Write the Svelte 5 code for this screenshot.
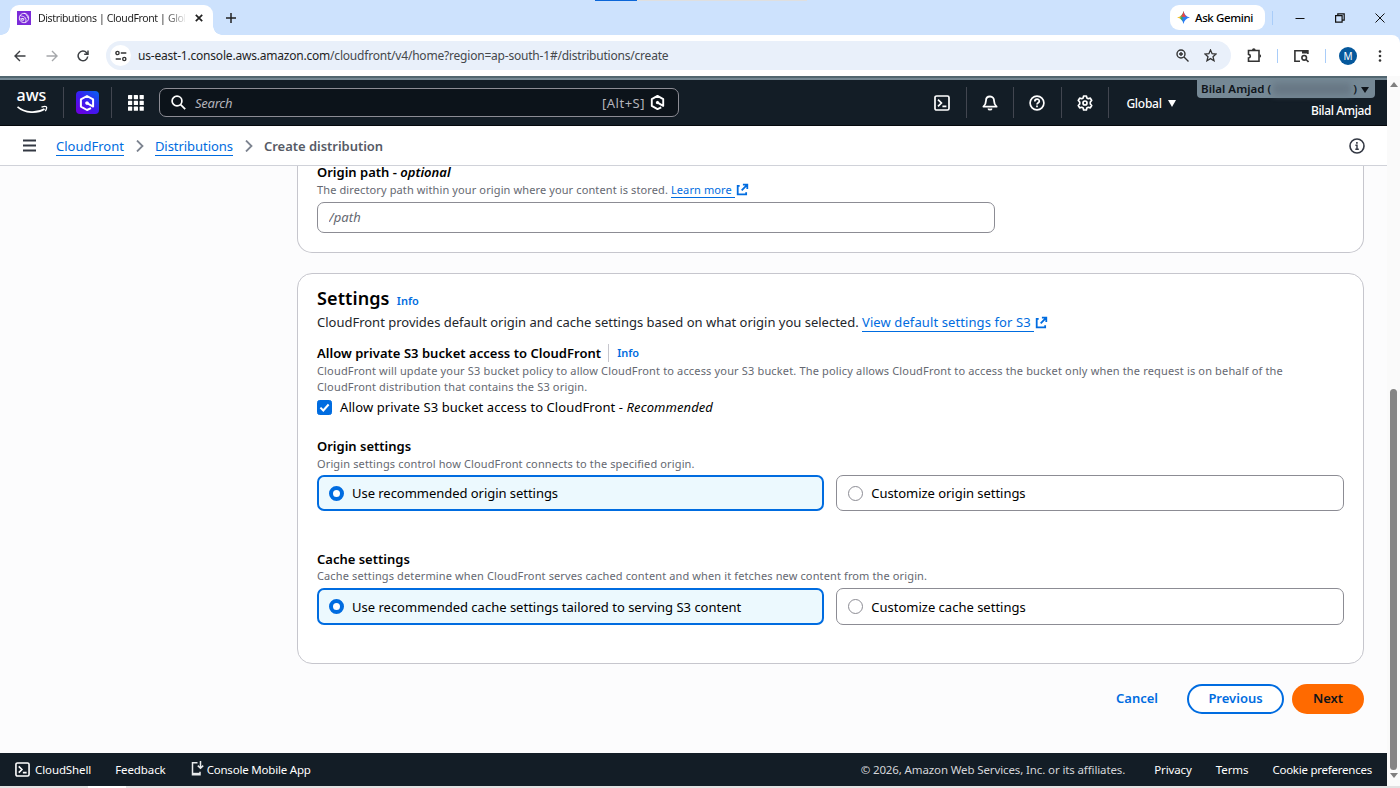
<script>
	const url = { host: "us-east-1.console.aws.amazon.com", path: "/cloudfront/v4/home?region=ap-south-1#/distributions/create" };

	let allowPrivate = $state(true);
	let groups = $state([
		{
			name: "origin",
			title: "Origin settings",
			hint: "Origin settings control how CloudFront connects to the specified origin.",
			options: ["Use recommended origin settings", "Customize origin settings"],
			selected: 0,
		},
		{
			name: "cache",
			title: "Cache settings",
			hint: "Cache settings determine when CloudFront serves cached content and when it fetches new content from the origin.",
			options: ["Use recommended cache settings tailored to serving S3 content", "Customize cache settings"],
			selected: 0,
		},
	]);
</script>

{#snippet shellIcon(size)}
	<svg width={size} height={size} viewBox="0 0 16 16" fill="none" stroke="currentColor" stroke-width="1.7">
		<rect x="1" y="1" width="14" height="14" rx="1.6" />
		<path d="M4 4.6 7.4 8 4 11.4M8.4 11.3h4" />
	</svg>
{/snippet}

{#snippet external(size)}
	<svg class="ext" width={size} height={size} viewBox="0 0 16 16" fill="none" stroke="currentColor" stroke-width="2.2">
		<path d="M8.500 2.100h5.400v5.400M13.600 2.400 7 9M4.500 3.500H2.100v10.400h10.400v-2.400" />
	</svg>
{/snippet}

{#snippet amazonQ(size)}
	<svg width={size} height={size} viewBox="0 0 16 16" fill="none" stroke="currentColor" stroke-width="2" stroke-linejoin="round">
		<path d="M12 13.200 8 15 1.900 11.600V4.400L8 1l6.100 3.400v7.200L8.500 8.400" />
		<path d="M8 6.200 9.700 7.100v1.900L8 9.900 6.300 9V7.100z" fill="currentColor" stroke="none" />
	</svg>
{/snippet}

<div class="window">
	<div class="tabstrip">
		<div class="tab">
			<svg width="14" height="14" viewBox="0 0 14 14" fill="none" stroke="#fff" stroke-width=".8">
				<rect width="14" height="14" fill="#7b2bd9" stroke="none" />
				<circle cx="7" cy="7" r="4.700" />
				<path d="M3 4.500c2 1 3 .5 4.500 1.500s2 3.500 1 5.500M7 2.200c2 .8 3.500 2.500 4 5M2.500 8.500c1.500-1 3-1.500 5-.5" />
				<circle cx="5.500" cy="8.800" r="1" />
			</svg>
			<span class="tab-title">Distributions | CloudFront | Glob</span>
			<svg width="8" height="8" viewBox="0 0 8 8" stroke="#222" stroke-width="1.7"><path d="m.8.8 6.400 6.400M7.200.8.8 7.200" /></svg>
		</div>
		<svg class="plus" width="10" height="10" viewBox="0 0 10 10" stroke="#222" stroke-width="1.500"><path d="M5 0v10M0 5h10" /></svg>
		<div class="progress"><i></i></div>
		<div class="gemini">
			<svg width="13" height="13" viewBox="0 0 13 13">
				<defs>
					<linearGradient id="gem" x1="0" y1=".4" x2="1" y2=".6">
						<stop offset="0" stop-color="#f6b81c" />
						<stop offset=".2" stop-color="#f0c02c" />
						<stop offset=".38" stop-color="#25a866" />
						<stop offset=".52" stop-color="#2b7cf5" />
						<stop offset="1" stop-color="#2b7cf5" />
					</linearGradient>
				</defs>
				<path d="M6.500 0C7.200 3.600 9.400 5.800 13 6.500 9.400 7.200 7.200 9.400 6.500 13 5.800 9.400 3.600 7.200 0 6.500 3.600 5.800 5.800 3.600 6.500 0z" fill="url(#gem)" />
				<path d="M6.500 0C7.200 3 7.900 4.500 9.500 5.600L6.500 6 3.800 5.200C5.200 4.300 6 3 6.500 0z" fill="#ee4145" />
			</svg>
			<span>Ask Gemini</span>
		</div>
		<span class="tick"></span>
		<div class="controls">
			<svg width="10" height="10" viewBox="0 0 10 10" stroke="#111"><path d="M.5 5.500h9" /></svg>
			<svg width="10" height="10" viewBox="0 0 10 10" fill="none" stroke="#111" stroke-width="1.200"><path d="M.6 2.600h6.500v6.500H.6zM2.800 2.300V.8h6.400v6.400H7.400" /></svg>
			<svg width="10" height="10" viewBox="0 0 10 10" stroke="#111"><path d="m.5.500 9 9m0-9-9 9" /></svg>
		</div>
	</div>

	<div class="toolbar">
		<div class="nav">
			<svg width="12" height="12" viewBox="0 0 12 12" fill="none" stroke="#3c3f43" stroke-width="1.400"><path d="M11.500 6H1.200M6 1 1 6l5 5" /></svg>
			<svg width="12" height="12" viewBox="0 0 12 12" fill="none" stroke="#a5a7aa" stroke-width="1.400"><path d="M.5 6h10.300M6 1l5 5-5 5" /></svg>
			<svg width="12" height="12" viewBox="0 0 12 12" fill="none" stroke="#3c3f43" stroke-width="1.500"><path d="M10.700 6.500A4.800 4.800 0 1 1 9.600 2.800L10.800 4M11 .5v3.800H7.200" /></svg>
		</div>
		<div class="omnibox">
			<span class="site">
				<svg width="12" height="12" viewBox="0 0 12 12" fill="none" stroke="#333" stroke-width="1.400"><circle cx="2.500" cy="3" r="1.600" /><path d="M5.800 3h5.500M.7 9h5.200" /><circle cx="9.300" cy="9" r="1.600" /></svg>
			</span>
			<span class="url"><b>{url.host}</b>{url.path}</span>
			<svg width="13" height="13" viewBox="0 0 13 13" fill="none" stroke="#333" stroke-width="1.400"><circle cx="5" cy="5" r="4" /><path d="m8 8 4.500 4.500M5 3v4M3 5h4" /></svg>
			<svg class="star" width="13" height="13" viewBox="0 0 13 13" fill="none" stroke="#333" stroke-width="1.300"><path d="m6.500 1 1.600 3.700 4 .3L9 7.700l1 4-3.500-2.100L3 11.700l1-4L.9 5l4-.3z" /></svg>
		</div>
		<svg class="puzzle" width="15" height="15" viewBox="0 0 15 15" fill="none" stroke="#333" stroke-width="1.600"><path d="M1.500 2.500H12v10.800H1.500V10c2.400-.3 2.400-3.300 0-3.600z" /><path d="M5 1.900a1.700 1.500 0 0 1 3.600 0zM12.600 6.200a1.500 1.700 0 0 1 0 3.400z" fill="#333" stroke="none" /></svg>
		<span class="tick"></span>
		<svg class="media" width="15" height="14" viewBox="0 0 15 14" fill="none" stroke="#333" stroke-width="1.600"><path d="M6 12.200H.9V1.800h13V5" /><path d="M8 3h6" stroke-width="3" /><circle cx="10.200" cy="8.800" r="2.300" /><path d="m12 10.500 2.500 2.500" /></svg>
		<span class="tick"></span>
		<span class="avatar">M</span>
		<svg class="dots" width="4" height="12" viewBox="0 0 4 12" fill="#333"><circle cx="2" cy="1.500" r="1.300" /><circle cx="2" cy="6" r="1.300" /><circle cx="2" cy="10.500" r="1.300" /></svg>
	</div>

	<div class="page">
		<div class="console">
			<header>
				<div class="logo">
					<span>aws</span>
					<svg width="31" height="9" viewBox="0 0 31 9" fill="none" stroke="#fff" stroke-width="1.700"><path d="M.5 1.800C8 8.300 20 8.600 27.500 4" /><path d="M24.500 2.200c2-.8 4-1 4.800-.5s.2 2.600-1 4.500" stroke-width="1.300" /></svg>
				</div>
				<div class="q-cell"><span class="q">{@render amazonQ(16)}</span></div>
				<svg class="grid" width="16" height="16" viewBox="0 0 16 16" fill="#fff">
					{#each [0, 5.800, 11.600] as y}
						{#each [0, 5.800, 11.600] as x}
							<rect {x} {y} width="4.200" height="4.200" rx=".6" />
						{/each}
					{/each}
				</svg>
				<div class="search">
					<svg width="15" height="15" viewBox="0 0 15 15" fill="none" stroke="#fff" stroke-width="1.700"><circle cx="6" cy="6" r="4.900" /><path d="m9.600 9.600 4.600 4.600" /></svg>
					<em>Search</em>
					<span class="keys">[Alt+S]</span>
					{@render amazonQ(15)}
				</div>
				<div class="tools">
					<span>{@render shellIcon(16)}</span>
					<span>
						<svg width="16" height="16" viewBox="0 0 16 16" fill="none" stroke="#fff" stroke-width="1.800" stroke-linejoin="round"><path d="M8 1.500C5.200 1.500 4 3.500 4 5.500c0 3-.8 4.500-2.600 6.200h13.200C12.800 10 12 8.500 12 5.500c0-2-1.200-4-4-4z" /><path d="M6.300 13.500c.4 1.600 3 1.600 3.400 0" /></svg>
					</span>
					<span>
						<svg width="16" height="16" viewBox="0 0 16 16" fill="none" stroke="#fff" stroke-width="1.700"><circle cx="8" cy="8" r="6.900" /><path d="M5.800 6.500c0-3 4.500-3 4.500-.3C10.300 7.800 8 7.700 8 9.600M8 10.600v1.700" /></svg>
					</span>
					<span>
						<svg width="16" height="16" viewBox="0 0 16 16" fill="none" stroke="#fff" stroke-width="1.700" stroke-linejoin="round"><path d="M6.600 1h2.800l.4 1.900 1.500.8 2-.6 1.400 2.400L13.300 7v2l1.400 1.500-1.400 2.400-2-.6-1.500.8-.4 1.900H6.600l-.4-1.900-1.500-.8-2 .6-1.400-2.400L2.700 9V7L1.300 5.500l1.400-2.400 2 .6 1.500-.8z" /><circle cx="8" cy="8" r="2" /></svg>
					</span>
				</div>
				<div class="region">Global <i class="caret"></i></div>
				<div class="account">
					<div class="badge">
						<span>Bilal Amjad (</span><span class="hidden-id"></span><span>)</span><i class="caret"></i>
					</div>
					<div class="user">Bilal Amjad</div>
				</div>
			</header>

			<nav class="crumbs">
				<svg width="13" height="13" viewBox="0 0 13 13" stroke="#333843" stroke-width="1.900"><path d="M0 1.500h13M0 6.500h13M0 11.500h13" /></svg>
				<a class="c1" href="#/home">CloudFront</a>
				<svg class="sep" width="8" height="12" viewBox="0 0 8 12" fill="none" stroke="#7d8490" stroke-width="1.800"><path d="m1 .5 5.500 5.500L1 11.500" /></svg>
				<a class="c2" href="#/distributions">Distributions</a>
				<svg class="sep" width="8" height="12" viewBox="0 0 8 12" fill="none" stroke="#7d8490" stroke-width="1.800"><path d="m1 .5 5.500 5.500L1 11.500" /></svg>
				<b class="c3">Create distribution</b>
				<svg class="about" width="16" height="16" viewBox="0 0 16 16" fill="none" stroke="#333843" stroke-width="1.600"><circle cx="8" cy="8" r="7" /><path d="M6.400 7.200H8v4M6.300 11.300h3.500" stroke-width="1.400" /><path d="M7.100 4.900h1.600" /></svg>
			</nav>

			<main>
				<section class="card first">
					<div class="label l-path">Origin path - <em>optional</em></div>
					<p class="hint h-path">The directory path within your origin where your content is stored. <a href="#/learn">Learn more&nbsp;</a>{@render external(13)}</p>
					<input placeholder="/path" />
				</section>

				<section class="card settings">
					<h2>Settings <a class="info" href="#/info">Info</a></h2>
					<p class="intro">CloudFront provides default origin and cache settings based on what origin you selected. <a href="#/defaults">View default settings for S3&nbsp;</a>{@render external(13)}</p>
					<div class="label l-allow"><span>Allow private S3 bucket access to CloudFront</span><a class="info bar" href="#/info">Info</a></div>
					<p class="hint h-allow">CloudFront will update your S3 bucket policy to allow CloudFront to access your S3 bucket. The policy allows CloudFront to access the bucket only when the request is on behalf of the<br />CloudFront distribution that contains the S3 origin.</p>
					<label class="check">
						<input type="checkbox" bind:checked={allowPrivate} />
						<svg width="15" height="15" viewBox="0 0 15 15" fill="none">
							<rect x=".5" y=".5" width="14" height="14" rx="2" fill={allowPrivate ? "#006ce0" : "#fff"} stroke={allowPrivate ? "#006ce0" : "#8c8c94"} />
							{#if allowPrivate}<path d="m3.400 7.600 2.900 2.900L11.600 4.500" stroke="#fff" stroke-width="2" />{/if}
						</svg>
						<span>Allow private S3 bucket access to CloudFront - <em>Recommended</em></span>
					</label>

					{#each groups as group}
						<fieldset class={group.name}>
							<div class="label">{group.title}</div>
							<p class="hint">{group.hint}</p>
							<div class="tiles">
								{#each group.options as option, i}
									<label class="tile" class:on={group.selected === i}>
										<input type="radio" name={group.name} value={i} bind:group={group.selected} />
										<i class="radio"></i>
										<span>{option}</span>
									</label>
								{/each}
							</div>
						</fieldset>
					{/each}
				</section>

				<div class="actions">
					<button class="cancel">Cancel</button>
					<button class="previous">Previous</button>
					<button class="next">Next</button>
				</div>
			</main>

			<footer>
				{@render shellIcon(15)}
				<span class="f-shell">CloudShell</span>
				<span class="f-feedback">Feedback</span>
				<svg class="phone" width="13" height="16" viewBox="0 0 13 16" fill="none" stroke="#e8eaec" stroke-width="1.500"><path d="M6.500 1.800H1.500v12h7.500v-3" /><path d="M1 12.800h8" stroke-width="2" /><path d="M9.500 0v7M6.800 4.600l2.700 2.700 2.700-2.700" /></svg>
				<span class="f-mobile">Console Mobile App</span>
				<span class="f-copy">© 2026, Amazon Web Services, Inc. or its affiliates.</span>
				<span class="f-privacy">Privacy</span>
				<span class="f-terms">Terms</span>
				<span class="f-cookie">Cookie preferences</span>
			</footer>
		</div>
		<div class="scrollbar">
			<svg width="8" height="5" viewBox="0 0 8 5" fill="#7f7f7f"><path d="M0 5 4 0l4 5z" /></svg>
			<div class="thumb"></div>
			<svg width="8" height="5" viewBox="0 0 8 5" fill="#7f7f7f"><path d="m0 0 4 5 4-5z" /></svg>
		</div>
	</div>
	<div class="edge"></div>
</div>

<style>
	:global(body) {
		margin: 0;
		overflow: hidden;
	}
	.window {
		display: flex;
		flex-direction: column;
		width: 1400px;
		height: 788px;
		background: #cde2fd;
		color: #000;
		font-family: "Noto Sans", "Open Sans", sans-serif;
		font-size: 13px;
		white-space: nowrap;
	}
	svg {
		display: block;
		flex: none;
	}
	.window :global(*) {
		box-sizing: border-box;
	}

	/* browser chrome */
	.tabstrip {
		position: relative;
		display: flex;
		align-items: center;
		height: 35px;
		background: #cde2fd;
	}
	.tab {
		position: relative;
		display: flex;
		align-items: center;
		align-self: flex-end;
		width: 203px;
		height: 30px;
		margin-left: 10px;
		padding: 0 10px 4px 7px;
		border-radius: 9px 9px 0 0;
		background: #fff;
	}
	/* curved feet on both sides of the active tab */
	.tab::before,
	.tab::after {
		content: "";
		position: absolute;
		bottom: 0;
		width: 9px;
		height: 9px;
	}
	.tab::before {
		left: -9px;
		background: radial-gradient(circle at 0 0, transparent 8.5px, #fff 9px);
	}
	.tab::after {
		right: -9px;
		background: radial-gradient(circle at 100% 0, transparent 8.5px, #fff 9px);
	}
	.tab-title {
		width: 148px;
		margin: 0 10px 0 7px;
		overflow: hidden;
		color: #1f1f1f;
		font-size: 10.5px;
		letter-spacing: -.38px;
		mask-image: linear-gradient(90deg, #000 86%, transparent 102%);
	}
	.plus {
		margin-left: 13px;
	}
	.progress {
		position: absolute;
		top: 0;
		left: 595px;
		width: 212px;
		height: 1px;
		background: #dfdfdf;
	}
	.progress i {
		display: block;
		width: 42px;
		height: 1px;
		background: #0b66d8;
	}
	.gemini {
		display: flex;
		align-items: center;
		gap: 5px;
		width: 95px;
		height: 25px;
		margin-left: auto;
		padding-left: 7px;
		border-radius: 9px;
		background: #fff;
		font-size: 11.5px;
		font-weight: 500;
		letter-spacing: -.38px;
	}
	.tick {
		width: 1px;
		height: 14px;
		background: #a9cdf9;
	}
	.tabstrip .tick {
		margin-left: 7px;
	}
	.controls {
		display: flex;
		gap: 30px;
		margin: 0 15px 0 22px;
	}
	.toolbar {
		display: flex;
		align-items: center;
		height: 41px;
		border-radius: 0 8px 0 0;
		background: #fff;
	}
	.nav {
		display: flex;
		gap: 19.500px;
		width: 106px;
		padding-left: 14px;
	}
	.omnibox {
		display: flex;
		align-items: center;
		width: 1125px;
		height: 29px;
		padding: 0 14px 0 4px;
		border-radius: 15px;
		background: #e9f0fa;
	}
	.site {
		display: grid;
		place-items: center;
		width: 21px;
		height: 21px;
		border-radius: 50%;
		background: #fff;
	}
	.url {
		flex: 1;
		margin-left: 7px;
		color: #45484c;
		font-size: 12px;
		letter-spacing: -.205px;
	}
	.url b {
		color: #1f1f1f;
		font-weight: 400;
	}
	.star {
		margin-left: 15px;
	}
	.puzzle {
		margin: 0 15px 0 16px;
	}
	.media {
		margin: 0 16px;
	}
	.avatar {
		width: 18px;
		height: 18px;
		margin-left: 13px;
		border-radius: 50%;
		background: #05589c;
		color: #fff;
		font-size: 10px;
		line-height: 18px;
		text-align: center;
	}
	.dots {
		margin-left: 21px;
	}

	/* console header */
	.page {
		display: flex;
		height: 710px;
	}
	.console {
		display: flex;
		flex-direction: column;
		width: 1387px;
	}
	header {
		display: flex;
		align-items: center;
		height: 50px;
		padding-top: 4px;
		border-bottom: 1px solid #05090d;
		background: linear-gradient(#526670 0 2px, #748894 2px 4px, #131d26 4px);
		color: #fff;
		flex: none;
	}
	.logo {
		width: 63.500px;
		height: 31px;
		padding-left: 16.500px;
		border-right: 1px solid #424650;
	}
	.logo span {
		display: block;
		height: 18px;
		font-size: 16px;
		font-weight: 500;
		line-height: 16px;
	}
	.q-cell {
		display: grid;
		place-items: center;
		width: 48.500px;
		height: 31px;
		border-right: 1px solid #424650;
	}
	.q {
		display: grid;
		place-items: center;
		width: 23px;
		height: 23px;
		border-radius: 4px;
		background: linear-gradient(40deg, #6a00e0 10%, #3a1cf0 50%, #0a5ff0 95%);
	}
	.grid {
		margin: 0 15.500px;
	}
	.search {
		display: flex;
		align-items: center;
		width: 520px;
		height: 29px;
		padding: 0 13px 0 11px;
		border: 1.500px solid #8c8c94;
		border-radius: 7px;
		background: #0c131a;
	}
	.search em {
		flex: 1;
		margin-left: 9px;
		color: #b4b4bb;
		letter-spacing: -.25px;
	}
	.keys {
		margin-right: 5px;
		color: #b4b4bb;
		letter-spacing: .5px;
	}
	.tools {
		display: flex;
		margin-left: 240px;
	}
	.tools span {
		display: grid;
		place-items: center;
		width: 47.600px;
		height: 31px;
		border-right: 1px solid #424650;
	}
	.region {
		display: flex;
		align-items: center;
		gap: 6px;
		margin: 1px 0 0 17px;
		font-size: 12px;
		font-weight: 500;
		letter-spacing: -.25px;
	}
	.caret {
		border: 4px solid transparent;
		border-top: 7px solid currentColor;
		border-bottom: 0;
	}
	.account {
		align-self: flex-start;
		width: 178px;
		margin: 0 12px 0 auto;
	}
	.badge {
		display: flex;
		align-items: center;
		height: 18px;
		padding: 0 6px 1px 4px;
		border-radius: 0 0 4px 4px;
		background: #758895;
		color: #0f141a;
		font-size: 11.500px;
		font-weight: 600;
		letter-spacing: .05px;
	}
	.hidden-id {
		flex: 1;
		height: 12px;
		margin: 0 2px;
		background: #687885;
		filter: blur(3px);
	}
	.badge .caret {
		margin: 3px 0 0 4px;
		border-top-width: 6px;
	}
	.user {
		padding-right: 4px;
		font-size: 12px;
		font-weight: 500;
		letter-spacing: -.4px;
		line-height: 26px;
		text-align: right;
	}

	/* breadcrumbs */
	.crumbs {
		display: flex;
		align-items: center;
		height: 40px;
		padding: 0 22px 0 23px;
		border-bottom: 1.500px solid #d0d2d9;
		background: #fff;
		flex: none;
	}
	a {
		border-bottom: 1px solid currentColor;
		color: #006ce0;
		text-decoration: none;
	}
	.crumbs a {
		margin-top: 2px;
		line-height: 17px;
	}
	.crumbs .c1 {
		margin-left: 20px;
	}
	.c2 {
		letter-spacing: -.05px;
	}
	.sep {
		margin: 1px 11px 0 12px;
	}
	.c3 {
		color: #565b66;
		font-weight: 600;
		letter-spacing: -.03px;
	}
	.about {
		margin-left: auto;
	}

	main {
		flex: 1;
		min-height: 0;
		padding: 0 23px 0 296.500px;
		overflow: hidden;
		background: #fcfcfd;
	}
	.card {
		padding: 0 19.500px;
		border: 1px solid #c6c6cd;
		border-radius: 15px;
		background: #fff;
	}
	.first {
		height: 90px;
		margin-top: -3px;
		border-top: 0;
		border-radius: 0 0 15px 15px;
	}
	.label {
		display: flex;
		height: 18px;
		font-size: 13px;
		font-weight: 600;
		line-height: 18px;
		white-space: pre;
	}
	p {
		margin: 0;
	}
	.hint {
		color: #656871;
		font-size: 11px;
		letter-spacing: .165px;
		line-height: 16px;
	}
	.ext {
		display: inline-block;
		margin-left: 1px;
		color: #006ce0;
		vertical-align: -2px;
	}
	.first input {
		display: block;
		width: 678px;
		height: 31px;
		margin-top: 4px;
		padding: 0 11px 1px;
		border: 1px solid #8c8c94;
		border-radius: 7px;
		font: italic 13px "Noto Sans", sans-serif;
		letter-spacing: .1px;
	}
	.first input::placeholder {
		color: #656871;
	}
	.h-path {
		padding-top: 1px;
		letter-spacing: .115px;
	}
	.settings {
		height: 391px;
		margin-top: 20px;
		padding-top: 12px;
	}
	h2 {
		height: 24px;
		margin: 0;
		font-size: 18px;
		font-weight: 600;
		line-height: 24px;
		letter-spacing: .1px;
	}
	.info {
		border: 0;
		font-size: 11px;
		font-weight: 600;
		letter-spacing: 0;
	}
	h2 .info {
		margin-left: 2.500px;
	}
	.intro {
		margin-top: 2px;
		color: #23262b;
		letter-spacing: -.008px;
		line-height: 20px;
	}
	.intro a {
		letter-spacing: .1px;
	}
	.l-allow {
		margin-top: 12px;
		letter-spacing: .03px;
	}
	.h-allow {
		padding-top: 1px;
		letter-spacing: .16px;
	}
	.bar {
		margin-left: 7px;
		padding-left: 8px;
		border-left: 1px solid #c6c6cd;
	}
	.check {
		display: flex;
		align-items: center;
		gap: 8px;
		height: 16px;
		margin-top: 4px;
		letter-spacing: .085px;
	}
	.check input,
	.tile input {
		display: none;
	}
	fieldset {
		margin: 22px 0 0;
		padding: 0;
		border: 0;
	}
	.origin .hint {
		padding-top: 1px;
		letter-spacing: .13px;
	}
	.cache {
		margin-top: 39px;
	}
	.cache .hint {
		letter-spacing: .125px;
	}
	.tiles {
		display: grid;
		grid-template-columns: 1fr 1fr;
		gap: 12px;
		margin-top: 3px;
	}
	.tile {
		display: flex;
		align-items: center;
		gap: 8px;
		height: 36px;
		padding-left: 11px;
		border: 1px solid #8c8c94;
		border-radius: 7px;
		letter-spacing: -.04px;
	}
	.tile.on {
		padding-left: 10px;
		border: 2px solid #006ce0;
		background: #ecf9fe;
	}
	.cache .tiles {
		margin-top: 4px;
	}
	.cache .tile {
		height: 37px;
		letter-spacing: 0;
	}
	.radio {
		width: 15px;
		height: 15px;
		border: 1px solid #8c8c94;
		border-radius: 50%;
		background: #fff;
	}
	.on .radio {
		border: 4.500px solid #006ce0;
	}
	.actions {
		display: flex;
		justify-content: flex-end;
		margin-top: 20px;
	}
	button {
		height: 30px;
		padding: 0 0 2px;
		border: 0;
		border-radius: 15px;
		background: none;
		color: #006ce0;
		font: 600 13px "Noto Sans", sans-serif;
	}
	.previous {
		width: 97px;
		margin: 0 8px 0 29px;
		border: 2px solid #006ce0;
		background: #fff;
	}
	.next {
		width: 72px;
		background: #ff6a00;
		color: #0f141a;
	}

	footer {
		display: flex;
		align-items: center;
		height: 33px;
		padding: 0 15px;
		background: #131d26;
		color: #fff;
		font-size: 11.500px;
		letter-spacing: -.1px;
		flex: none;
	}
	.f-shell {
		margin-left: 5px;
	}
	.f-feedback {
		margin-left: 24px;
	}
	.phone {
		margin: -2px 3px 0 25px;
	}
	.f-mobile {
		letter-spacing: -.2px;
	}
	.f-copy {
		margin-left: auto;
		color: #d3d5d9;
		letter-spacing: -.12px;
	}
	.f-privacy {
		margin-left: 29px;
	}
	.f-terms,
	.f-cookie {
		margin-left: 24px;
	}
	.f-cookie {
		letter-spacing: -.24px;
	}

	.scrollbar {
		display: flex;
		flex-direction: column;
		align-items: center;
		justify-content: space-between;
		width: 13px;
		padding: 6px 0 8px;
		background: #fafafa;
	}
	.thumb {
		width: 7px;
		height: 381px;
		margin-top: 299px;
		border-radius: 4px;
		background: #858585;
	}
	.edge {
		flex: 1;
		background: linear-gradient(90deg, #e2e2e2 88px, #fff 88px 126px, #e2e2e2 126px);
	}
</style>
